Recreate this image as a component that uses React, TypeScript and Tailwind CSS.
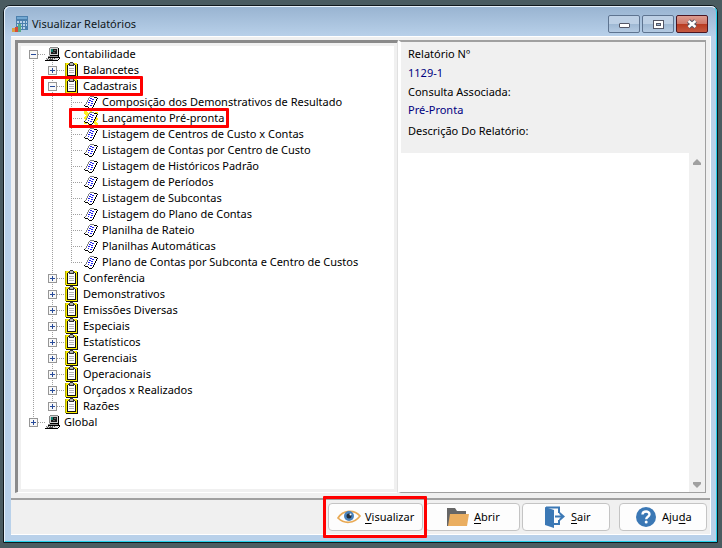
import type { ReactNode } from "react";

const Expander = ({ open, label }: { open: boolean; label: string }) => (
  <button aria-label={label} aria-expanded={open} className="relative z-10 block size-[9px] shrink-0">
    <svg viewBox="0 0 9 9" className="size-[9px]" shapeRendering="crispEdges">
      <rect width="9" height="9" fill="#969696" />
      <rect x="1" y="1" width="7" height="7" fill="#f8f8f8" />
      <path d="M2 4h5v1h-5z" fill="#274b9a" />
      {!open && <path d="M4 2h1v5h-1z" fill="#274b9a" />}
    </svg>
  </button>
);

const Computer = () => (
  <svg viewBox="0 0 16 16" className="size-4 shrink-0" shapeRendering="crispEdges">
    <path d="M5 1h8v1H5zM4 2h1v7H4zM3 10h10v1H3zM1 12h12v1H1z" fill="#8a8a8a" />
    <path d="M5 2h8v7H5zM4 9h9v1H4z" fill="#d0d0d0" />
    <path d="M6 3h6v5H6z" fill="#1c1c1c" />
    <path d="M6 3h2v3H6z" fill="#108070" />
    <path d="M9 4h2v1H9zM8 6h2v1H8z" fill="#606060" />
    <path d="M13 2h1v8h-1zM5 9h8v1H5zM13 10h1v1h-1zM3 11h11v1H3zM14 11h1v2h-1zM13 13h1v1h-1zM0 14h13v1H0z" fill="#000" />
    <path d="M2 12h11v1H2zM1 13h11v1H1z" fill="#d8d8d8" />
    <path d="M3 12h1v1H3zM5 12h1v1H5zM7 12h1v1H7zM9 12h1v1H9zM2 13h1v1H2zM4 13h4v1H4z" fill="#555" />
  </svg>
);

const Clipboard = () => (
  <svg viewBox="0 0 16 16" className="size-4 shrink-0" shapeRendering="crispEdges">
    <path d="M1 1h12v1h1v14H2v-1H1z" fill="#111" />
    <path d="M1 1h12v14H1z" fill="#f8ec00" />
    <path d="M1 1h1v14H1z" fill="#b0a800" />
    <path d="M3 3h9v11H3z" fill="#111" />
    <path d="M4 3h7v10H4z" fill="#fff" />
    <path d="M6 0h3v1H6zM5 1h1v1H5zM9 1h1v1H9zM4 2h7v1H4zM5 3h5v1H5z" fill="#333" />
    <path d="M6 1h3v2H6z" fill="#b0b0b0" />
    <path d="M5 6h5v1H5zM5 8h5v1H5zM5 10h5v1H5z" fill="#b4b4b4" />
  </svg>
);

const Report = ({ lit }: { lit?: boolean }) => (
  <svg viewBox="0 0 16 16" className="size-4 shrink-0" shapeRendering="crispEdges">
    {lit && <path d="M1 1h2l3 3 1-3h2l1 3 3-2h2v2l-2 3 2 1v2l-2 1 2 3v1h-2l-3-2-2 3H6l-1-3-3 1H1v-2l2-2-2-1V7l2-1-2-3z" fill="#ffee20" />}
    <path d="M7 3h4l1 1h2v2h-1v2h-1v2h-1v2h-1v1H9v1H6v-1H2v-2h1V9h1V7h1V5h1V4h1z" fill="#fff" />
    <path d="M7 2h4v1H7zM6 3h1v1H6zM5 4h1v2H5zM4 6h1v2H4zM3 8h1v2H3zM2 10h1v1H2z" fill="#808080" />
    <path d="M11 3h3v1h-3zM14 4h1v1h-1zM13 5h1v2h-1zM12 7h1v2h-1zM11 9h1v2h-1zM10 11h1v2h-1zM1 11h1v1H1zM2 12h3v1H2zM5 13h1v1H5zM6 14h3v1H6zM9 13h1v1H9z" fill="#000" />
    <path d="M7 4h2v1H7zM9 5h2v1H9zM6 6h2v1H6zM8 7h2v1H8zM5 8h2v1H5zM8 9h2v1H8zM5 10h1v1H5zM7 11h2v1H7z" fill="#2020f0" />
  </svg>
);

const H = "h-px bg-[repeating-linear-gradient(90deg,#a0a0a0_0_1px,transparent_1px_2px)]";
const V = "w-px bg-[repeating-linear-gradient(180deg,#a0a0a0_0_1px,transparent_1px_2px)]";

const reports = [
  "Composição dos Demonstrativos de Resultado",
  "Lançamento Pré-pronta",
  "Listagem de Centros de Custo x Contas",
  "Listagem de Contas por Centro de Custo",
  "Listagem de Históricos Padrão",
  "Listagem de Períodos",
  "Listagem de Subcontas",
  "Listagem do Plano de Contas",
  "Planilha de Rateio",
  "Planilhas Automáticas",
  "Plano de Contas por Subconta e Centro de Custos",
];
const groups = [
  "Balancetes", "Cadastrais", "Conferência", "Demonstrativos", "Emissões Diversas",
  "Especiais", "Estatísticos", "Gerenciais", "Operacionais", "Orçados x Realizados", "Razões",
];

const Mark = ({ className }: { className: string }) => (
  <span aria-hidden className={`pointer-events-none absolute z-20 rounded-[1px] border-3 border-[#ff0000] ${className}`} />
);

const Row = ({ label, open, icon }: { label: string; open: boolean; icon: ReactNode }) => (
  <div className="flex h-4 items-center">
    <Expander open={open} label={label} />
    <span className={`w-[7px] ${H}`} />
    {icon}
    <span className="ml-[3px] whitespace-nowrap">{label}</span>
  </div>
);

const Tree = () => (
  <ul className="pl-2">
    <li className="relative">
      <span className={`absolute top-3 bottom-0 left-1 ${V}`} />
      <Row label="Contabilidade" open icon={<Computer />} />
      <ul className="pl-[19px]">
        {groups.map((g, i) => (
          <li key={g} className="relative">
            <span className={`absolute top-0 left-1 ${i === groups.length - 1 ? "h-2" : "h-full"} ${V}`} />
            <Row label={g} open={g === "Cadastrais"} icon={<Clipboard />} />
            {g === "Cadastrais" && (
              <>
                <Mark className="-top-[2px] -left-[7px] h-5 w-[102px]" />
                <ul className="pl-[23px]">
                  {reports.map((r, j) => (
                    <li key={r} className="relative flex h-4 items-center">
                      <span className={`absolute top-0 left-0 ${j === reports.length - 1 ? "h-2" : "h-full"} ${V}`} />
                      <span className={`w-3 ${H}`} />
                      <Report lit={j === 1} />
                      <span className="ml-[3px] whitespace-nowrap">{r}</span>
                      {j === 1 && <Mark className="-top-[2px] -left-[2px] h-5 w-[160px]" />}
                    </li>
                  ))}
                </ul>
              </>
            )}
          </li>
        ))}
      </ul>
    </li>
    <li className="relative">
      <span className={`absolute top-0 left-1 h-2 ${V}`} />
      <Row label="Global" open={false} icon={<Computer />} />
    </li>
  </ul>
);

const Eye = () => (
  <svg viewBox="0 0 24 16" className="h-4 w-6">
    <path d="M1 9C6 1 17 0 23 7 17 15 7 15 1 9Z" fill="#fff" stroke="#e9aa55" strokeWidth="1.7" />
    <circle cx="12" cy="7" r="5" fill="#4a83bd" />
    <circle cx="12" cy="7" r="2.5" fill="#222d3a" />
    <circle cx="13.5" cy="5.5" r="1" fill="#fff" />
  </svg>
);
const Folder = () => (
  <svg viewBox="0 0 24 20" className="h-5 w-6">
    <path d="M1 19V1h8l2 3h9v4H5L3 19Z" fill="#666" />
    <path d="M4 7h19l-2 12H2Z" fill="#eaae60" />
  </svg>
);
const Exit = () => (
  <svg viewBox="0 0 20 22" className="h-[22px] w-5">
    <path d="M0 1l9 3v18l-9-3Z" fill="#3b78b5" />
    <path d="M1 1.500h13V7M14 14v4H9M10 10.500h8M14.500 7l4 3.500-4 3.500" fill="none" stroke="#3b78b5" strokeWidth="2" />
  </svg>
);
const Help = () => (
  <svg viewBox="0 0 20 20" className="size-5">
    <circle cx="10" cy="10" r="10" fill="#3b78b5" />
    <path d="M6.500 7.500C6.700 3.500 13.500 3.500 13.500 7.300c0 2.500-3.300 2.500-3.300 5" fill="none" stroke="#fff" strokeWidth="2.400" />
    <circle cx="10.200" cy="15" r="1.500" fill="#fff" />
  </svg>
);

const Action = ({ icon, className, children }: { icon: ReactNode; className: string; children: ReactNode }) => (
  <button className={`relative flex h-7 items-center rounded-[4px] border border-[#c4c4c4] bg-[#fdfdfd] ${className}`}>
    {icon}
    <span className="whitespace-nowrap">{children}</span>
  </button>
);
const Key = ({ children }: { children: string }) => <span className="underline underline-offset-2">{children}</span>;

const caption = "flex h-[18px] w-8 items-center justify-center rounded-[2px] border";
const captionBlue = "border-[#5e7490] bg-[linear-gradient(#bdd0e5_50%,#9eb8d3_50%,#b4cae2_100%)]";

export default function App() {
  return (
    <main className="flex h-screen flex-col bg-[#4a5b60] pt-[5px] pr-1 pb-[5px] pl-[3px] font-['Noto_Sans','Open_Sans',sans-serif] text-[11px] leading-4 text-black">
      <div className="flex min-h-0 flex-1 flex-col rounded-t-[7px] border border-[#10181c] bg-[#b9d1ea]">
        <div className="flex min-h-0 flex-1 flex-col rounded-t-[6px] border border-t-[#e8f2fb] border-r-[#22d0ea] border-b-[#22d0ea] border-l-[#e8f2fb] bg-[linear-gradient(180deg,#99b4d1_0px,#b9d1ea_30px)] pr-[5px] pb-[6px] pl-[6px]">
          <header className="flex h-[29px] shrink-0 items-center">
            <svg viewBox="0 0 16 16" className="mt-1 ml-px size-4" shapeRendering="crispEdges">
              <path d="M4 0h12v14H4z" fill="#4b80ad" />
              <path d="M5 1h10v2H5z" fill="#72a8d2" />
              <path d="M5 5h2v2H5zM8 5h2v2H8zM11 5h2v2h-2zM14 5h1v2h-1zM5 8h2v2H5zM8 8h2v2H8zM11 8h2v2h-2zM14 8h1v2h-1zM8 11h2v2H8zM11 11h2v2h-2z" fill="#b8d2e8" />
              <path d="M0 12h3v4H0z" fill="#d7a044" />
              <path d="M3 11h3v5H3z" fill="#d64b38" />
              <path d="M6 8h3v8H6z" fill="#57a987" />
            </svg>
            <h1 className="mt-[5px] ml-1 flex-1 whitespace-nowrap text-[#101820]">Visualizar Relatórios</h1>
            <div className="mr-[3px] flex gap-[2px] pt-[5px]">
              <button aria-label="Minimizar" className={`${caption} ${captionBlue}`}>
                <span className="mt-[3px] h-[5px] w-[11px] rounded-[1px] border border-[#535666] bg-white" />
              </button>
              <button aria-label="Maximizar" className={`${caption} ${captionBlue}`}>
                <svg viewBox="0 0 11 9" className="h-[9px] w-[11px]" shapeRendering="crispEdges"><path d="M0 0h11v9H0z" fill="#535666" /><path d="M1 1h9v7H1z" fill="#fff" /><path d="M3 3h5v3H3z" fill="#535666" /><path d="M4 4h3v1H4z" fill="#9eb8d3" /></svg>
              </button>
              <button aria-label="Fechar" className={`${caption} border-[#4b1622] bg-[linear-gradient(#dd9c90_0%,#cf7768_50%,#b83a20_50%,#c65a42_100%)]`}>
                <svg viewBox="0 0 12 10" className="h-[10px] w-3"><path d="M2.500 2l7 6M9.500 2l-7 6" stroke="#535666" strokeWidth="4.500" /><path d="M2.500 2l7 6M9.500 2l-7 6" stroke="#fff" strokeWidth="2.500" /></svg>
              </button>
            </div>
          </header>

          <div className="flex min-h-0 flex-1 flex-col border-y border-r border-white bg-[#f0f0f0]">
            <div className="flex min-h-0 flex-1 pt-[3px] pr-1 pb-[5px] pl-1">
              <section aria-label="Relatórios" className="flex w-[383px] shrink-0 border-t-3 border-r border-b border-l-3 border-t-[#8a8a8a] border-r-[#e0e0e0] border-b-white border-l-[#8a8a8a] pt-[3px] pr-[3px] pb-[3px] pl-[3px]">
                <div className="min-w-0 flex-1 bg-white"><Tree /></div>
              </section>
              <section aria-label="Detalhes" className="flex min-w-0 flex-1 flex-col border-t-2 border-r border-b border-l-3 border-t-[#a0a0a0] border-r-[#a0a0a0] border-b-[#a0a0a0] border-l-white">
                <dl className="h-[111px] shrink-0 px-[7px] pt-1 whitespace-nowrap">
                  <dt>Relatório Nº</dt>
                  <dd className="mt-[3px] text-[#000080]">1129-1</dd>
                  <dt className="mt-[3px]">Consulta Associada:</dt>
                  <dd className="mt-[2px] text-[#000080]">Pré-Pronta</dd>
                  <dt className="mt-[5px]">Descrição Do Relatório:</dt>
                </dl>
                <div className="flex min-h-0 flex-1">
                  <textarea aria-label="Descrição Do Relatório" readOnly className="min-w-0 flex-1 resize-none bg-white outline-none" />
                  <div className="flex w-4 flex-col items-center justify-between bg-[#f0f0f0] pt-[6px] pb-1">
                    <svg viewBox="0 0 8 6" className="h-[6px] w-2"><path d="M4 0l4 4v2H0V4Z" fill="#a0a0a0" /></svg>
                    <svg viewBox="0 0 8 6" className="h-[6px] w-2"><path d="M4 6l4-4V0H0v2Z" fill="#a0a0a0" /></svg>
                  </div>
                </div>
              </section>
            </div>
            <footer className="flex h-9 shrink-0 items-start justify-end border-t-2 border-[#a0a0a0] pt-[3px] pr-[3px]">
              <div className="relative">
                <Action className="w-[95px] gap-1 pl-2" icon={<Eye />}><Key>V</Key>isualizar</Action>
                <Mark className="-top-[7px] -left-[5px] h-[42px] w-[104px]" />
              </div>
              <Action className="ml-[2px] w-[95px] gap-1 pl-5" icon={<Folder />}><Key>A</Key>brir</Action>
              <Action className="ml-[2px] w-[88px] gap-[6px] pl-[22px]" icon={<Exit />}><Key>S</Key>air</Action>
              <Action className="ml-[9px] w-[88px] gap-[6px] pl-4" icon={<Help />}>Aju<Key>d</Key>a</Action>
            </footer>
          </div>
        </div>
      </div>
    </main>
  );
}
